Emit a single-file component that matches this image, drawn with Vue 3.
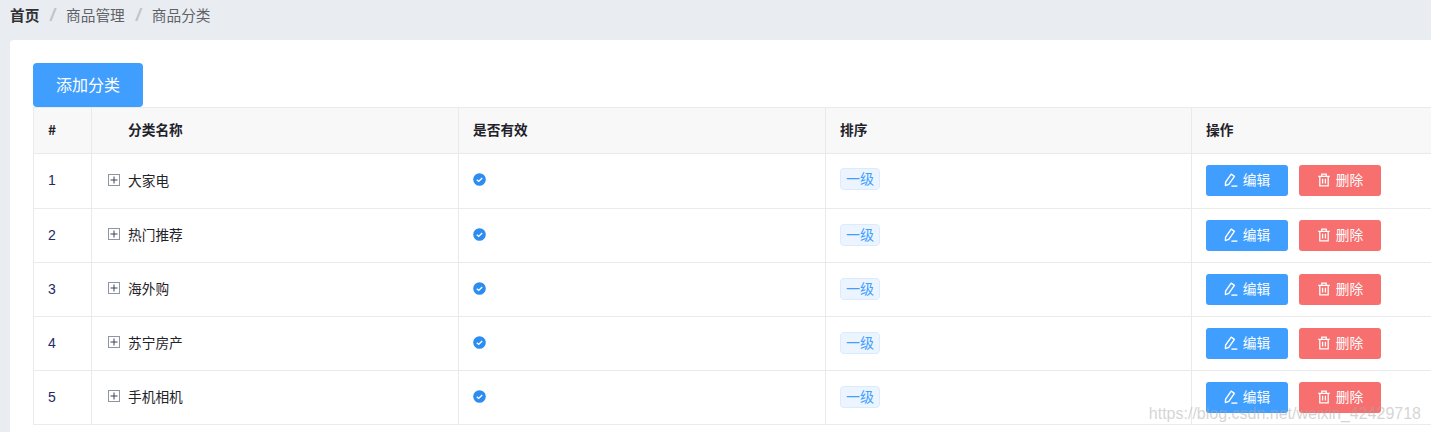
<script setup>
const rows = [
  { id: 1, name: '大家电' },
  { id: 2, name: '热门推荐' },
  { id: 3, name: '海外购' },
  { id: 4, name: '苏宁房产' },
  { id: 5, name: '手机相机' },
]
</script>

<template>
  <div class="page">
    <nav class="crumbs">
      <b class="crumb-home">首页</b><i class="sep">/</i><span>商品管理</span><i class="sep">/</i><span>商品分类</span>
    </nav>
    <section class="card">
      <button class="add">添加分类</button>
      <table class="grid">
        <thead>
          <tr>
            <th>#</th>
            <th class="name-head">分类名称</th>
            <th>是否有效</th>
            <th>排序</th>
            <th>操作</th>
          </tr>
        </thead>
        <tbody>
          <tr v-for="r in rows" :key="r.id">
            <td class="num">{{ r.id }}</td>
            <td class="name">
              <div class="tree">
                <svg class="plus" viewBox="0 0 12 12" width="12" height="12">
                  <rect x="0.5" y="0.5" width="11" height="11" fill="#fff" stroke="#8f96a3" />
                  <path d="M2.5 6H9.5M6 2.5V9.5" stroke="#3a4356" stroke-width="1" fill="none" />
                </svg>
                <span>{{ r.name }}</span>
              </div>
            </td>
            <td>
              <svg class="check" viewBox="0 0 13 13" width="13" height="13">
                <circle cx="6.5" cy="6.5" r="6.3" fill="#2d8cf0" />
                <path d="M3.8 6.7 5.7 8.4 9.2 4.9" fill="none" stroke="#fff" stroke-width="1.4" />
              </svg>
            </td>
            <td><span class="tag">一级</span></td>
            <td>
              <div class="actions">
                <button class="btn edit">
                  <svg viewBox="0 0 14 14" width="14" height="14" fill="none" stroke="#fff" stroke-width="1.4">
                    <path d="M1.6 9.2 7.2 1.2 10.4 3.4 4.8 11.4 1.4 12.6Z" stroke-linejoin="round" />
                    <path d="M7.4 13.1H13.4" />
                  </svg>
                  <span>编辑</span>
                </button>
                <button class="btn del">
                  <svg viewBox="0 0 14 14" width="14" height="14" fill="none" stroke="#fff" stroke-width="1.3">
                    <path d="M1.2 3.4H12.8M4.8 3.4V1.2H9.2V3.4M2.8 3.4V12.9H11.2V3.4M5.6 5.8V10.4M8.4 5.8V10.4" />
                  </svg>
                  <span>删除</span>
                </button>
              </div>
            </td>
          </tr>
        </tbody>
      </table>
    </section>
    <div class="mark">https://blog.csdn.net/weixin_42429718</div>
  </div>
</template>

<style>
html, body { margin: 0; background: #e9edf2; }
</style>

<style scoped>
.page {
  position: relative;
  width: 1431px;
  height: 432px;
  overflow: hidden;
  background: #e9edf2;
  font-family: "Noto Sans CJK SC", "Liberation Sans", sans-serif;
  color: #1f2229;
}
.crumbs {
  height: 30px;
  padding: 0 0 10px 10px;
  display: flex;
  align-items: center;
  font-size: 14.7px;
  line-height: 30px;
  color: #606266;
}
.crumb-home { color: #303133; font-weight: 700; width: 29px; white-space: nowrap; }
.sep {
  width: 27px;
  text-align: center;
  font-style: italic;
  font-family: "Liberation Sans", sans-serif;
  font-size: 18px;
  font-weight: 700;
  color: #c0c4cc;
}
.card {
  width: 1590px;
  height: 420px;
  box-sizing: border-box;
  margin-left: 10px;
  padding: 23px;
  background: #fff;
  border-radius: 4px;
}
.add {
  display: block;
  width: 110px;
  height: 44px;
  padding: 0 0 2px;
  border: 0;
  border-radius: 4px;
  background: #409eff;
  color: #fff;
  font: 16px "Noto Sans CJK SC", sans-serif;
}
.grid {
  width: 1525px;
  table-layout: fixed;
  border-collapse: collapse;
  font-size: 13.7px;
}
.grid th, .grid td {
  box-sizing: border-box;
  border: 1px solid #e9eaec;
  padding: 0 14px;
  text-align: left;
}
.grid th {
  height: 46px;
  padding-bottom: 4px;
  background: #f8f8f9;
  font-weight: 700;
  font-size: 13.7px;
  color: #1f2229;
}
.grid td { height: 54px; padding-bottom: 2px; }
.grid tbody tr:first-child td { height: 55px; }
.grid th:nth-child(1) { width: 58px; }
.grid th:nth-child(2) { width: 367px; }
.grid th:nth-child(3) { width: 367px; }
.grid th:nth-child(4) { width: 366px; }
.grid th.name-head { padding-left: 36px; }
.num { color: #1c2a66; font-family: "Liberation Sans", sans-serif; font-size: 14px; }
.grid td.name { padding-left: 16px; }
.tree { display: flex; align-items: center; gap: 8px; margin-bottom: 2px; }
.grid tbody tr:first-child .tree { margin-bottom: 0; }
.plus, .check { display: block; flex: none; }
.grid tbody tr:first-child .check { margin-bottom: 1px; }
.tag {
  display: inline-flex;
  align-items: center;
  justify-content: center;
  box-sizing: border-box;
  width: 40px;
  height: 22px;
  padding-bottom: 2px;
  background: #ecf5ff;
  border: 1px solid #d9ecff;
  border-radius: 4px;
  color: #409eff;
  font-size: 14px;
  vertical-align: middle;
}
.grid tbody tr:first-child .tag { margin-bottom: 2px; }
.actions { display: flex; gap: 11px; margin-bottom: -2px; }
.grid tbody tr:first-child .actions { margin-bottom: -1px; }
.btn {
  display: flex;
  align-items: center;
  justify-content: center;
  gap: 5px;
  width: 82px;
  height: 31px;
  padding: 0 0 4px;
  border: 0;
  border-radius: 3px;
  color: #fff;
  font: 13.7px "Noto Sans CJK SC", sans-serif;
}
.btn svg { margin-top: 2px; }
.edit { background: #409eff; }
.del { background: #f76f6f; }
.mark {
  position: absolute;
  right: 10px;
  top: 404px;
  font: 16px/19px "Liberation Sans", sans-serif;
  color: rgba(170, 170, 170, 0.5);
  pointer-events: none;
}
</style>
